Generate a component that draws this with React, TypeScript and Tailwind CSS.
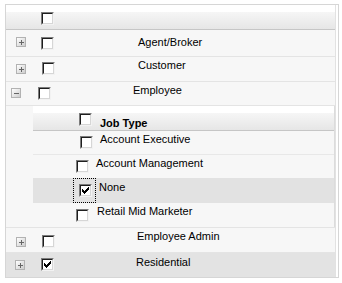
import React from 'react';

// classic sunken checkbox, 13x13
function Check({ checked }: { checked?: boolean }) {
  return (
    <span className="flex h-[13px] w-[13px] shrink-0 border border-t-[#7c7c7c] border-l-[#7c7c7c] border-r-[#f2f2f2] border-b-[#f2f2f2]">
      <span className="flex flex-1 items-center justify-center border border-t-[#1e1e1e] border-l-[#1e1e1e] border-r-[#d6d6d6] border-b-[#d6d6d6] bg-white">
        {checked && (
          <svg width="7" height="7" viewBox="0 0 7 7" shapeRendering="crispEdges">
            <path
              fill="#000"
              d="M6 0h1v1h-1z M5 1h2v1h-2z M0 2h1v1h-1z M4 2h3v1h-3z M0 3h2v1h-2z M3 3h3v1h-3z M0 4h5v1h-5z M1 5h3v1h-3z M2 6h1v1h-1z"
            />
          </svg>
        )}
      </span>
    </span>
  );
}

function Expander({ open }: { open?: boolean }) {
  return (
    <span className="flex h-[10px] w-[10px] shrink-0 items-center justify-center border border-[#b2b2b2] bg-gradient-to-br from-white to-[#cdcdcd]">
      <svg width="5" height="5" viewBox="0 0 5 5" shapeRendering="crispEdges">
        <rect x="0" y="2" width="5" height="1" fill="#666" />
        {!open && <rect x="2" y="0" width="1" height="5" fill="#666" />}
      </svg>
    </span>
  );
}

export default function App() {
  return (
    <div className="font-['Liberation_Sans',Arial,sans-serif] text-[11px] leading-[13px] text-black">
      <div className="ml-[5px] mt-[4px] w-[334px] border border-[#d6d6d6] bg-white">
        <div className="mr-[2px] border-r border-[#e2e2e2]">
          <div className="h-[7px] bg-white" />

          {/* header */}
          <div className="flex h-[18px] border-b border-[#c6c6c6] bg-gradient-to-b from-[#f6f6f6] to-[#e6e6e6]">
            <span className="ml-[35px]">
              <Check />
            </span>
          </div>

          {/* Agent/Broker */}
          <div className="flex h-[27px] items-start border-b border-[#e4e4e4] bg-[#f7f7f7]">
            <span className="ml-[10px] mt-[7px]"><Expander /></span>
            <span className="ml-[15px] mt-[7px]"><Check /></span>
            <span className="ml-[84px] mt-[6px]">Agent/Broker</span>
          </div>

          {/* Customer */}
          <div className="flex h-[25px] items-start border-b border-[#e4e4e4] bg-[#f7f7f7]">
            <span className="ml-[10px] mt-[7px]"><Expander /></span>
            <span className="ml-[16px] mt-[5px]"><Check /></span>
            <span className="ml-[83px] mt-[2px]">Customer</span>
          </div>

          {/* Employee */}
          <div className="flex h-[24px] items-start border-b border-[#e4e4e4] bg-[#f7f7f7]">
            <span className="ml-[5px] mt-[6px]"><Expander open /></span>
            <span className="ml-[17px] mt-[5px]"><Check /></span>
            <span className="ml-[82px] mt-[2px]">Employee</span>
          </div>

          {/* nested Job Type table */}
          <div className="flex h-[122px] border-b border-[#e4e4e4] bg-[#f7f7f7] pl-[27px]">
            <div className="flex flex-1 flex-col border-r border-[#dcdcdc]">
              <div className="h-[7px] bg-white" />
              <div className="flex h-[18px] items-start border-b border-[#c6c6c6] bg-gradient-to-b from-[#f6f6f6] to-[#e6e6e6]">
                <span className="ml-[46px]"><Check /></span>
                <span className="ml-[8px] mt-[4px] font-bold">Job Type</span>
              </div>
              <div className="flex h-[24px] items-start border-b border-[#e8e8e8]">
                <span className="ml-[47px] mt-[5px]"><Check /></span>
                <span className="ml-[7px] mt-[2px]">Account Executive</span>
              </div>
              <div className="flex h-[23px] items-start">
                <span className="ml-[43px] mt-[5px]"><Check /></span>
                <span className="ml-[7px] mt-[2px]">Account Management</span>
              </div>
              <div className="flex h-[25px] items-start bg-[#e2e2e2]">
                <span className="ml-[40px] flex h-[25px] w-[23px] border border-dotted border-black pl-[5px] pt-[5px]">
                  <Check checked />
                </span>
                <span className="ml-[3px] mt-[3px]">None</span>
              </div>
              <div className="flex h-[24px] items-start">
                <span className="ml-[43px] mt-[6px]"><Check /></span>
                <span className="ml-[8px] mt-[2px]">Retail Mid Marketer</span>
              </div>
            </div>
          </div>

          {/* Employee Admin */}
          <div className="flex h-[25px] items-start border-b border-[#e4e4e4] bg-[#f7f7f7]">
            <span className="ml-[10px] mt-[9px]"><Expander /></span>
            <span className="ml-[16px] mt-[7px]"><Check /></span>
            <span className="ml-[82px] mt-[2px]">Employee Admin</span>
          </div>

          {/* Residential */}
          <div className="flex h-[24px] items-start bg-[#e3e3e3]">
            <span className="ml-[9px] mt-[7px]"><Expander /></span>
            <span className="ml-[16px] mt-[5px]"><Check checked /></span>
            <span className="ml-[82px] mt-[3px]">Residential</span>
          </div>
        </div>
      </div>
    </div>
  );
}
